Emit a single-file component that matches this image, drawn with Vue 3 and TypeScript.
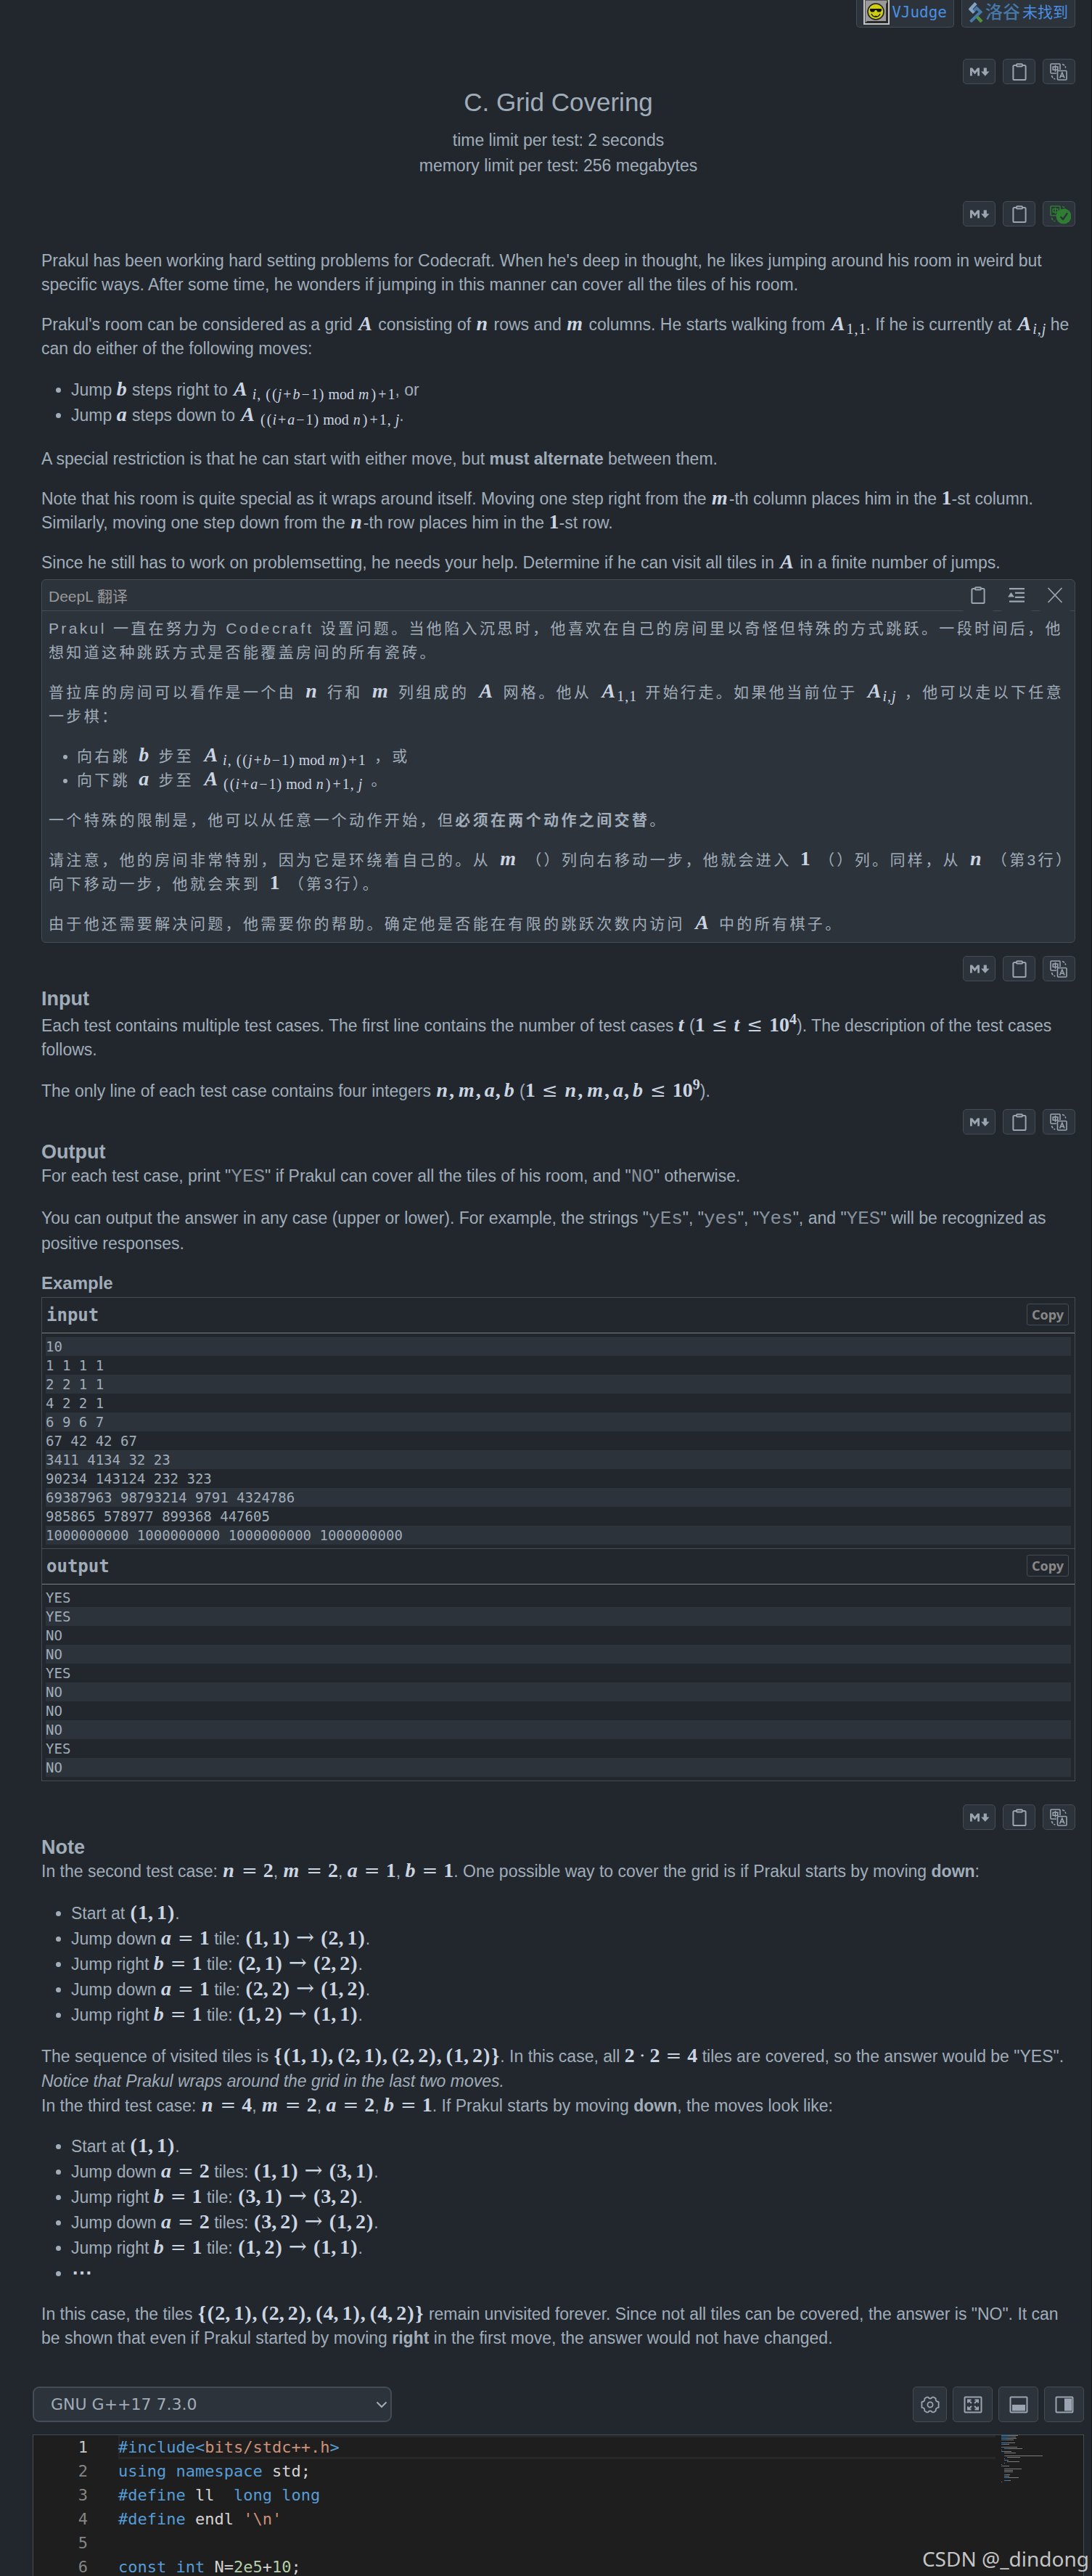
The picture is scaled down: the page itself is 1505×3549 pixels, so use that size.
<script setup lang="ts">
import { h, type FunctionalComponent, type VNode } from 'vue'

/* ---- inline maths: letters are italic, _{..} and ^{..} lower and raise a group ---- */
const relations: Record<string, string> = { '=': 'mx-rel', '≤': 'mx-rel mx-le', '→': 'mx-rel mx-to' }

function parseMath(src: string): VNode[] {
  const out: VNode[] = []
  let k = 0
  while (k < src.length) {
    const c = src[k]
    if (c === '_' || c === '^') {
      const end = src.indexOf('}', k)
      const inner = parseMath(src.slice(k + 2, end))
      out.push(h(c === '_' ? 'sub' : 'sup', inner))
      k = end + 1
      continue
    }
    if (src.startsWith('mod', k)) {
      out.push(h('span', { class: 'mx-word' }, 'mod'))
      k += 3
      continue
    }
    if (/[a-zA-Z]/.test(c)) out.push(h('i', { class: `mx-${c}` }, c))
    else if (/[0-9]/.test(c)) out.push(h('b', c))
    else if (relations[c]) out.push(h('span', { class: relations[c] }, c))
    else if ('+−⋅'.includes(c)) out.push(h('span', { class: 'mx-bin' }, c))
    else if (c === ',') out.push(h('span', { class: 'mx-punct' }, c))
    else if (c === ' ') out.push(h('span', { class: 'mx-gap' }))
    else out.push(h('span', { class: 'mx-paren' }, c))
    k++
  }
  return out
}
const M: FunctionalComponent<{ t: string }> = (props) => h('span', { class: 'mx' }, parseMath(props.t))
M.props = ['t']

const ClipIcon: FunctionalComponent = () =>
  h('svg', { width: 20, height: 24, viewBox: '0 0 20 24', fill: 'none', stroke: 'currentColor', 'stroke-width': 2 }, [
    h('path', { d: 'M5 3H3a1.6 1.6 0 0 0-1.6 1.6v16.8A1.6 1.6 0 0 0 3 23h14a1.6 1.6 0 0 0 1.6-1.6V4.600A1.6 1.6 0 0 0 17 3h-2' }),
    h('rect', { x: 6, y: 1.2, width: 8, height: 3.4, rx: 1 }),
  ])

const Tools: FunctionalComponent<{ done?: boolean }> = (props) =>
  h('div', { class: 'tools' }, [
    h('button', { type: 'button', 'aria-label': 'Markdown' }, [
      h('svg', { width: 28, height: 14, viewBox: '0 0 28 14', fill: 'currentColor' }, [
        h('path', { d: 'M1 12.500V1.500H4L7.500 6 11 1.500h3v11h-2.800V6L7.500 10.400 3.800 6v6.500z' }),
        h('path', { d: 'M19.700 1.500h4.200v5h3.600L21.800 12.800 16.100 6.500h3.600z' }),
      ]),
    ]),
    h('button', { type: 'button', 'aria-label': 'Copy' }, [h(ClipIcon)]),
    h('button', { type: 'button', 'aria-label': 'Translate', class: props.done ? 'done' : '' }, [
      h('svg', { width: 32, height: 28, viewBox: '0 0 32 28', fill: 'none', stroke: 'currentColor', 'stroke-width': 1.6 }, [
        h('path', { d: 'M12 16H5a1 1 0 0 1-1-1V4a1 1 0 0 1 1-1h11a1 1 0 0 1 1 1v7' }),
        h('path', { d: 'M7.200 7h6.600v4.200H7.200zM10.500 4.800v9' }),
        h('path', { d: 'M20 3.500c2.500.6 4.300 2.400 4.800 5M5.500 19c.5 2.600 2.200 4.300 4.800 5', 'stroke-dasharray': '3.500 1.500' }),
        props.done
          ? h('g', [
              h('circle', { cx: 22, cy: 17, r: 10.500, fill: 'currentColor', stroke: 'none' }),
              h('path', { d: 'M17.500 17.500l3.600 3.600 6-8.600', stroke: '#2d333b', 'stroke-width': 2.400 }),
            ])
          : h('g', [
              h('rect', { x: 13.500, y: 12.500, width: 12.500, height: 12.500, rx: 1 }),
              h('path', { d: 'M16.600 22.500l3.200-7.500 3.200 7.500M17.800 20h4' }),
            ]),
      ]),
    ]),
  ])
Tools.props = { done: Boolean }

const samples = [
  {
    name: 'input',
    odd: true,
    rows: ['10', '1 1 1 1', '2 2 1 1', '4 2 2 1', '6 9 6 7', '67 42 42 67', '3411 4134 32 23', '90234 143124 232 323', '69387963 98793214 9791 4324786', '985865 578977 899368 447605', '1000000000 1000000000 1000000000 1000000000'],
  },
  { name: 'output', odd: false, rows: ['YES', 'YES', 'NO', 'NO', 'YES', 'NO', 'NO', 'NO', 'YES', 'NO'] },
]

const firstWalk = [
  { text: 'Jump down', eq: 'a=1', unit: 'tile:', move: '(1,1)→(2,1)' },
  { text: 'Jump right', eq: 'b=1', unit: 'tile:', move: '(2,1)→(2,2)' },
  { text: 'Jump down', eq: 'a=1', unit: 'tile:', move: '(2,2)→(1,2)' },
  { text: 'Jump right', eq: 'b=1', unit: 'tile:', move: '(1,2)→(1,1)' },
]
const secondWalk = [
  { text: 'Jump down', eq: 'a=2', unit: 'tiles:', move: '(1,1)→(3,1)' },
  { text: 'Jump right', eq: 'b=1', unit: 'tile:', move: '(3,1)→(3,2)' },
  { text: 'Jump down', eq: 'a=2', unit: 'tiles:', move: '(3,2)→(1,2)' },
  { text: 'Jump right', eq: 'b=1', unit: 'tile:', move: '(1,2)→(1,1)' },
]

/* [token class, text] pairs for every editor line */
const code: [string, string][][] = [
  [['kw', '#include<'], ['str', 'bits/stdc++.h'], ['kw', '>']],
  [['kw', 'using namespace'], ['id', ' std;']],
  [['kw', '#define'], ['id', ' ll  '], ['kw', 'long long']],
  [['kw', '#define'], ['id', ' endl '], ['str', "'\\n'"]],
  [],
  [['kw', 'const int'], ['id', ' N='], ['num', '2e5'], ['id', '+'], ['num', '10'], ['id', ';']],
]

/* minimap strokes: indent, keyword length, rest length */
const minimap: [number, number, number][] = [
  [0, 9, 14], [0, 15, 5], [0, 7, 14], [0, 7, 10], [0, 0, 0], [0, 9, 10], [0, 3, 8], [0, 0, 0], [0, 3, 19], [4, 6, 19], [0, 0, 1],
  [0, 4, 10], [4, 0, 16], [0, 0, 0], [4, 2, 51], [8, 0, 18], [4, 0, 1], [4, 4, 2], [8, 0, 17], [4, 0, 1], [0, 0, 1],
  [0, 3, 8], [0, 0, 0], [4, 0, 24], [4, 0, 12], [4, 0, 12], [0, 0, 0], [4, 3, 5], [4, 0, 7], [4, 5, 15], [0, 0, 0], [4, 6, 3], [0, 0, 1],
]
</script>

<template>
  <div class="page">
    <main class="problem">
      <nav class="links">
        <a href="#vjudge">
          <svg width="36" height="34" viewBox="0 0 36 34">
            <rect width="36" height="34" fill="#c4c4c4" />
            <path d="M2 32V0h32v32z" fill="#555" />
            <path d="M3 31V1h29v30z" fill="#9a9a9a" />
            <path d="M2 32h32V2l-3 3v24H5z" fill="#2a2a2a" />
            <circle cx="17" cy="16" r="11" fill="#cfcf10" stroke="#222" stroke-width="1.6" />
            <path d="M9 12h16v2.500l-1.500 2h-4L18 14h-2l-1.500 2.500h-4L9 14.500z" fill="#111" />
            <path d="M11 19c2 5.500 10 5.500 12 0M15.500 22.500h3" fill="none" stroke="#222" stroke-width="1.500" />
          </svg>
          <span>VJudge</span>
        </a>
        <a href="#luogu">
          <svg width="20" height="28" viewBox="0 0 20 28" fill="none">
            <path d="M10 1.500L2.500 9.500l5 5" stroke="#84a2c2" stroke-width="4.500" />
            <path d="M7 12l4-4 5.500 5.500L2.500 27" stroke="#4678a8" stroke-width="4" />
            <path d="M11.500 20l6.500 7" stroke="#55913d" stroke-width="4.500" />
          </svg>
          <strong>洛谷</strong>
          <span>未找到</span>
        </a>
      </nav>

      <Tools />
      <header class="head">
        <h1>C. Grid Covering</h1>
        <div>time limit per test: 2 seconds</div>
        <div>memory limit per test: 256 megabytes</div>
      </header>
      <Tools class="after-head" done />

      <section class="statement">
        <p>Prakul has been working hard setting problems for Codecraft. When he's deep in thought, he likes jumping around his room in weird but specific ways. After some time, he wonders if jumping in this manner can cover all the tiles of his room.</p>
        <p>Prakul's room can be considered as a grid <M t="A" /> consisting of <M t="n" /> rows and <M t="m" /> columns. He starts walking from <M t="A_{1,1}" />. If he is currently at <M t="A_{i,j}" /> he can do either of the following moves:</p>
        <ul>
          <li>Jump <M t="b" /> steps right to <M t="A_{ i, ((j+b−1) mod m)+1}" />, or</li>
          <li>Jump <M t="a" /> steps down to <M t="A_{ ((i+a−1) mod n)+1, j}" />.</li>
        </ul>
        <p>A special restriction is that he can start with either move, but <strong>must alternate</strong> between them.</p>
        <p>Note that his room is quite special as it wraps around itself. Moving one step right from the <M t="m" />-th column places him in the <M t="1" />-st column. Similarly, moving one step down from the <M t="n" />-th row places him in the <M t="1" />-st row.</p>
        <p>Since he still has to work on problemsetting, he needs your help. Determine if he can visit all tiles in <M t="A" /> in a finite number of jumps.</p>
      </section>

      <article class="card" lang="zh-CN">
        <header>
          <span>DeepL 翻译</span>
          <div class="card-tools">
            <button type="button" aria-label="复制"><ClipIcon /></button>
            <button type="button" aria-label="收起">
              <svg width="24" height="22" viewBox="0 0 24 22" fill="currentColor">
                <path d="M2 1h21v2.200H2zM10 6.700h13v2.200H10zM10 12.700h13v2.200H10zM2 18.500h21v2.200H2zM0 13.500l4.500-6.500L9 13.500z" />
              </svg>
            </button>
            <button type="button" aria-label="关闭">
              <svg width="22" height="22" viewBox="0 0 22 22" stroke="currentColor" stroke-width="1.800"><path d="M1.500 1l19 20M20.500 1l-19 20" /></svg>
            </button>
          </div>
        </header>
        <div class="card-body">
          <p>Prakul 一直在努力为 Codecraft 设置问题。当他陷入沉思时，他喜欢在自己的房间里以奇怪但特殊的方式跳跃。一段时间后，他想知道这种跳跃方式是否能覆盖房间的所有瓷砖。</p>
          <p>普拉库的房间可以看作是一个由 <M t="n" /> 行和 <M t="m" /> 列组成的 <M t="A" /> 网格。他从 <M t="A_{1,1}" /> 开始行走。如果他当前位于 <M t="A_{i,j}" /> ，他可以走以下任意一步棋：</p>
          <ul>
            <li>向右跳 <M t="b" /> 步至 <M t="A_{ i, ((j+b−1) mod m)+1}" /> ，或</li>
            <li>向下跳 <M t="a" /> 步至 <M t="A_{ ((i+a−1) mod n)+1, j}" /> 。</li>
          </ul>
          <p>一个特殊的限制是，他可以从任意一个动作开始，但<strong>必须在两个动作之间交替</strong>。</p>
          <p>请注意，他的房间非常特别，因为它是环绕着自己的。从 <M t="m" /> （）列向右移动一步，他就会进入 <M t="1" /> （）列。同样，从 <M t="n" /> （第3行）向下移动一步，他就会来到 <M t="1" /> （第3行）。</p>
          <p>由于他还需要解决问题，他需要你的帮助。确定他是否能在有限的跳跃次数内访问 <M t="A" /> 中的所有棋子。</p>
        </div>
      </article>

      <Tools class="after-card" />
      <section class="spec">
        <h2>Input</h2>
        <p class="raised">Each test contains multiple test cases. The first line contains the number of test cases <M t="t" /> (<M t="1≤t≤10^{4}" />). The description of the test cases follows.</p>
        <p>The only line of each test case contains four integers <M t="n,m,a,b" /> (<M t="1≤n,m,a,b≤10^{9}" />).</p>
      </section>

      <Tools class="after-input" />
      <section class="spec">
        <h2>Output</h2>
        <p>For each test case, print "<code>YES</code>" if Prakul can cover all the tiles of his room, and "<code>NO</code>" otherwise.</p>
        <p class="loose">You can output the answer in any case (upper or lower). For example, the strings "<code>yEs</code>", "<code>yes</code>", "<code>Yes</code>", and "<code>YES</code>" will be recognized as positive responses.</p>
      </section>

      <section class="example">
        <h3>Example</h3>
        <div class="samples">
          <div v-for="s in samples" :key="s.name" class="sample" :class="{ odd: s.odd }">
            <header>
              <h4>{{ s.name }}</h4>
              <button type="button">Copy</button>
            </header>
            <pre><span v-for="(r, n) in s.rows" :key="n">{{ r }}</span></pre>
          </div>
        </div>
      </section>

      <Tools class="after-example" />
      <section class="spec note">
        <h2>Note</h2>
        <p>In the second test case: <M t="n=2" />, <M t="m=2" />, <M t="a=1" />, <M t="b=1" />. One possible way to cover the grid is if Prakul starts by moving <strong>down</strong>:</p>
        <ul>
          <li>Start at <M t="(1,1)" />.</li>
          <li v-for="(w, n) in firstWalk" :key="n">{{ w.text }} <M :t="w.eq" /> {{ w.unit }} <M :t="w.move" />.</li>
        </ul>
        <p class="medium">
          The sequence of visited tiles is <M t="{(1,1),(2,1),(2,2),(1,2)}" />. In this case, all <M t="2⋅2=4" /> tiles are covered, so the answer would be "YES".<br />
          <em>Notice that Prakul wraps around the grid in the last two moves.</em><br />
          In the third test case: <M t="n=4" />, <M t="m=2" />, <M t="a=2" />, <M t="b=1" />. If Prakul starts by moving <strong>down</strong>, the moves look like:
        </p>
        <ul>
          <li>Start at <M t="(1,1)" />.</li>
          <li v-for="(w, n) in secondWalk" :key="n">{{ w.text }} <M :t="w.eq" /> {{ w.unit }} <M :t="w.move" />.</li>
          <li><M t="⋯" /></li>
        </ul>
        <p>In this case, the tiles <M t="{(2,1),(2,2),(4,1),(4,2)}" /> remain unvisited forever. Since not all tiles can be covered, the answer is "NO". It can be shown that even if Prakul started by moving <strong>right</strong> in the first move, the answer would not have changed.</p>
      </section>
    </main>

    <section class="workbench">
      <div class="bar">
        <div class="picker">
          <select aria-label="Compiler">
            <option>GNU G++17 7.3.0</option>
          </select>
          <svg width="16" height="10" viewBox="0 0 16 10" fill="none" stroke="currentColor" stroke-width="2"><path d="M1.500 1.500L8 8l6.500-6.500" /></svg>
        </div>
        <div class="bar-tools">
          <button type="button" class="narrow" aria-label="Settings">
            <svg width="26" height="26" viewBox="0 0 26 26" fill="none" stroke="currentColor" stroke-width="1.800" stroke-linejoin="round">
              <path d="M8.300 2.600l2 .1c.7 1.300 1.500 1.800 2.700 1.800s2-.5 2.700-1.800l2-.1 3 1.900c-.2 1.800 0 2.700.9 3.500.8.700 1.700 1 3 1.100v7.800c-1.300.1-2.200.4-3 1.100-.9.800-1.100 1.700-.9 3.500l-3 1.900-2-.1c-.7-1.300-1.500-1.800-2.700-1.800s-2 .5-2.700 1.800l-2 .1-3-1.900c.2-1.800 0-2.700-.9-3.500-.8-.7-1.700-1-3-1.100V9.100c1.300-.1 2.200-.4 3-1.100.9-.8 1.100-1.700.9-3.500z" />
              <circle cx="13" cy="13" r="3.600" />
            </svg>
          </button>
          <button type="button" aria-label="Full screen">
            <svg width="26" height="24" viewBox="0 0 26 24" fill="none" stroke="currentColor" stroke-width="2">
              <rect x="1.500" y="1.500" width="23" height="21" rx="1" />
              <path d="M6 9.500V5.500h4.500M6.500 6l4.500 4M15.500 5.500H20v4M19.500 6L15 10M6 14.500v4h4.500M6.500 18l4.500-4M20 14.500v4h-4.500M19.500 18L15 14" />
            </svg>
          </button>
          <button type="button" aria-label="Dock bottom">
            <svg width="26" height="24" viewBox="0 0 26 24">
              <rect x="1.500" y="1.500" width="23" height="21" rx="1" fill="none" stroke="currentColor" stroke-width="2" />
              <path d="M4 12h18v8.500H4z" fill="currentColor" />
            </svg>
          </button>
          <button type="button" aria-label="Dock right">
            <svg width="26" height="24" viewBox="0 0 26 24">
              <rect x="1.500" y="1.500" width="23" height="21" rx="1" fill="none" stroke="currentColor" stroke-width="2" />
              <path d="M13 3.500h10v17H13z" fill="currentColor" />
            </svg>
          </button>
        </div>
      </div>
      <div class="editor">
        <ol class="lines">
          <li v-for="(line, n) in code" :key="n" :class="{ current: n === 0 }">
            <span class="no">{{ n + 1 }}</span>
            <code><span v-for="(t, j) in line" :key="j" :class="t[0]">{{ t[1] }}</span></code>
          </li>
        </ol>
        <svg class="map" width="113" height="70" viewBox="0 0 113 70">
          <g v-for="(m, n) in minimap" :key="n">
            <rect :x="m[0]" :y="n * 2" :width="m[1]" height="1" fill="#3f79a8" />
            <rect :x="m[0] + m[1]" :y="n * 2" :width="m[2]" height="1" fill="#7a7a7a" />
          </g>
        </svg>
      </div>
    </section>
    <div class="mark">CSDN @_dindong</div>
  </div>
</template>

<style>
body {
  margin: 0;
  background: #22272e;
}
.mx {
  font-family: "Liberation Serif", "Times New Roman", serif;
  font-size: 28px;
  line-height: 28px;
  letter-spacing: 0;
  color: #cbd5e1;
  white-space: nowrap;
}
.mx i {
  font-weight: 700;
  padding-right: 1px;
}
.mx .mx-A {
  padding: 0 2px;
}
.mx .mx-n,
.mx .mx-m {
  padding: 0 2px 0 1px;
}
.mx b,
.mx-punct,
.mx-paren {
  font-weight: 700;
}
.mx-paren {
  padding: 0 1px;
}
.mx-punct {
  padding-right: 5px;
}
.mx-rel,
.mx-bin {
  font-family: "DejaVu Serif", serif;
  font-size: 26px;
  margin: 0 8px;
}
.mx-le {
  margin: 0 9px;
}
.mx-to {
  font-size: 30px;
}
.mx-bin {
  margin: 0 6px;
}
.mx-gap {
  padding-left: 4px;
}
.mx sub,
.mx sup {
  font-size: 20px;
  line-height: 20px;
  vertical-align: -5px;
}
.mx sup {
  line-height: 0;
  vertical-align: 10px;
}
.mx sub i,
.mx sub b,
.mx sub span {
  font-weight: 400;
  padding: 0;
}
.mx sub .mx-paren,
.mx sub .mx-punct {
  padding: 0 1px;
}
.mx sub .mx-bin {
  font-family: inherit;
  font-size: 20px;
  margin: 0 2px;
}
.mx sub .mx-gap {
  padding-left: 5px;
}
.tools {
  display: flex;
  justify-content: flex-end;
  gap: 10px;
  margin-top: 43px;
}
.tools button {
  display: flex;
  align-items: center;
  justify-content: center;
  width: 45px;
  height: 35px;
  padding: 0;
  border: 1px solid #444c56;
  border-radius: 5px;
  background: #2d333b;
  color: #9aa5b1;
}
.tools .done {
  color: #2e7d32;
}
</style>

<style scoped>
.page {
  position: relative;
  display: flex;
  flex-direction: column;
  box-sizing: border-box;
  min-height: 100vh;
  border-right: 1px solid #15181c;
  font-family: "Liberation Sans", Arial, "Noto Sans CJK SC", sans-serif;
  font-size: 23px;
  line-height: 33px;
  color: #a0adb9;
  background: #22272e;
}
.problem {
  padding: 0 22px 0 57px;
}
.links {
  display: flex;
  justify-content: flex-end;
  gap: 10px;
}
.links a {
  display: flex;
  align-items: center;
  gap: 3px;
  box-sizing: border-box;
  height: 38px;
  padding: 0 9px 3px;
  border: 1px solid #444c56;
  border-top: 0;
  border-radius: 0 0 5px 5px;
  background: #2d333b;
  color: #4a90e2;
  font-family: "DejaVu Sans Mono", "Noto Sans CJK SC", monospace;
  font-size: 21px;
  text-decoration: none;
}
.links strong {
  font-size: 24px;
  font-weight: 500;
  color: #4678a8;
}
.head {
  text-align: center;
  line-height: 35px;
}
.head h1 {
  margin: 4px 0 14px;
  font-size: 35px;
  font-weight: 400;
  line-height: 42px;
}
.after-head {
  margin-top: 31px;
}
.statement {
  margin-top: 31px;
}
p {
  margin: 0 0 22px;
}
.statement p:last-child {
  margin: 0;
}
ul {
  margin: 23px 0 26px;
  padding-left: 41px;
  line-height: 35px;
}
.card {
  margin-top: 6px;
  border: 1px solid #444c56;
  border-radius: 6px;
  background: #2d333b;
  font-size: 21px;
}
.card > header {
  display: flex;
  justify-content: space-between;
  height: 42px;
  padding: 0 3px 0 9px;
  border-bottom: 1px solid #444c56;
  line-height: 46px;
  color: #999;
}
.card-tools {
  display: flex;
  gap: 5px;
}
.card-tools button {
  display: flex;
  align-items: center;
  justify-content: center;
  width: 48px;
  height: 43px;
  padding: 0 0 1px;
  border: 0;
  border-radius: 5px;
  background: #2d333b;
  color: #9aa5b1;
}
.card-body {
  padding: 7px 9px 9px;
  letter-spacing: 0.16em;
}
.card-body p:last-child {
  margin: 0;
}
.card-body ul {
  margin: 22px 0;
  padding-left: 39px;
  line-height: 33px;
}
.card-body .mx {
  margin: 0 3px;
}
.after-card {
  margin-top: 18px;
}
.after-input {
  margin-top: 8px;
}
h2 {
  margin: 9px 0 2px;
  font-size: 27px;
  line-height: 30px;
}
.spec p {
  margin: 0 0 24px;
}
.spec p.raised {
  margin-top: 6px;
}
.spec p:last-child {
  margin: 0;
}
.spec .loose {
  line-height: 35px;
}
.spec .medium {
  margin: 0 0 22px;
  line-height: 34px;
}
.note ul {
  margin: 22px 0;
}
.spec code {
  font-family: "Liberation Mono", "Courier New", monospace;
  font-size: 26px;
  line-height: 26px;
  color: #87919c;
}
h3 {
  margin: 20px 0 3px;
  font-size: 24px;
}
.samples {
  border: 1px solid #444c56;
  font-family: "DejaVu Sans Mono", Consolas, monospace;
}
.sample + .sample {
  border-top: 1px solid #444c56;
}
.sample header {
  display: flex;
  align-items: center;
  justify-content: space-between;
  height: 48px;
  padding: 0 8px 0 6px;
  border-bottom: 1px solid #7d7f80;
}
h4 {
  margin: 0;
  font-size: 24px;
}
.sample button {
  height: 30px;
  padding: 0 6px;
  border: 1px solid #444c56;
  border-radius: 3px;
  background: #22272e;
  color: #888;
  font: 700 18px "Noto Sans", sans-serif;
  line-height: 26px;
  margin-bottom: 2px;
}
.sample pre {
  margin: 0;
  padding: 5px;
  font-family: inherit;
  font-size: 19px;
  line-height: 26px;
}
.sample pre span {
  display: block;
}
.sample.odd pre span:nth-child(odd),
.sample:not(.odd) pre span:nth-child(even) {
  background: #2d333b;
}
.after-example {
  margin-top: 32px;
}
.workbench {
  display: flex;
  flex: 1 0 0;
  flex-direction: column;
  min-height: 0;
  margin-top: 50px;
  padding: 0 10px 0 45px;
}
.bar {
  display: flex;
  justify-content: space-between;
}
.picker {
  position: relative;
  flex: 0 1 495px;
  color: #a0adb9;
}
.picker select {
  width: 100%;
  height: 49px;
  padding: 0 24px 0 23px;
  border: 2px solid #444c56;
  border-radius: 9px;
  appearance: none;
  background: #2d333b;
  color: inherit;
  font: 22px "DejaVu Sans", Verdana, sans-serif;
}
.picker svg {
  position: absolute;
  top: 20px;
  right: 6px;
  pointer-events: none;
}
.bar-tools {
  display: flex;
  gap: 8px;
}
.bar-tools button {
  display: flex;
  align-items: center;
  justify-content: center;
  width: 55px;
  height: 49px;
  padding: 0;
  border: 1px solid #444c56;
  border-radius: 5px;
  background: #2d333b;
  color: #9aa5b1;
}
.bar-tools .narrow {
  width: 47px;
}
.editor {
  display: flex;
  flex: 1 0 0;
  min-height: 0;
  margin-top: 17px;
  overflow: hidden;
  border: 1px solid #444c56;
  border-bottom: 0;
  background: #1e1e1e;
}
.lines {
  flex: 1;
  margin: 0;
  padding: 0;
  list-style: none;
  font-family: "DejaVu Sans Mono", Consolas, monospace;
  font-size: 22px;
}
.lines li {
  display: flex;
  height: 33px;
}
.no {
  width: 75px;
  margin-right: 42px;
  text-align: right;
  color: #858585;
}
.current .no {
  color: #c6c6c6;
}
.lines code {
  flex: 1;
  box-sizing: border-box;
  font-family: inherit;
  white-space: pre;
}
.current code {
  box-shadow: inset 2px 3px #282828, inset 0 -3px #282828;
}
.kw {
  color: #569cd6;
}
.str {
  color: #ce9178;
}
.id {
  color: #d4d4d4;
}
.num {
  color: #b5cea8;
}
.map {
  margin-left: 8px;
}
.mark {
  position: absolute;
  right: 3px;
  bottom: 4px;
  font: 28px/40px "Noto Sans", sans-serif;
  color: #c4c4c4;
}
</style>
